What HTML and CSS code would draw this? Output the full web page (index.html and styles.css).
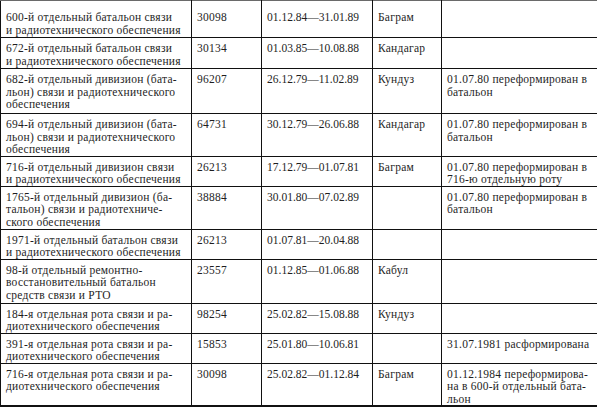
FILE: index.html
```html
<!DOCTYPE html>
<html lang="ru">
<head>
<meta charset="utf-8">
<title>Таблица</title>
<link rel="stylesheet" href="styles.css">
</head>
<body>
<table class="units">
  <colgroup>
    <col class="c-name"><col class="c-num"><col class="c-date"><col class="c-place"><col class="c-note">
  </colgroup>
  <tbody>
    <tr>
      <td><span class="ln">600-й отдельный батальон связи</span><span class="ln">и радиотехнического обеспечения</span></td>
      <td>30098</td>
      <td class="date">01.12.84—31.01.89</td>
      <td>Баграм</td>
      <td></td>
    </tr>
    <tr>
      <td><span class="ln">672-й отдельный батальон связи</span><span class="ln">и радиотехнического обеспечения</span></td>
      <td>30134</td>
      <td class="date">01.03.85—10.08.88</td>
      <td>Кандагар</td>
      <td></td>
    </tr>
    <tr>
      <td><span class="ln">682-й отдельный дивизион (бата-</span><span class="ln">льон) связи и радиотехнического</span><span class="ln">обеспечения</span></td>
      <td>96207</td>
      <td class="date">26.12.79—11.02.89</td>
      <td>Кундуз</td>
      <td><span class="ln">01.07.80 переформирован в</span><span class="ln">батальон</span></td>
    </tr>
    <tr>
      <td><span class="ln">694-й отдельный дивизион (бата-</span><span class="ln">льон) связи и радиотехнического</span><span class="ln">обеспечения</span></td>
      <td>64731</td>
      <td class="date">30.12.79—26.06.88</td>
      <td>Кандагар</td>
      <td><span class="ln">01.07.80 переформирован в</span><span class="ln">батальон</span></td>
    </tr>
    <tr>
      <td><span class="ln">716-й отдельный дивизион связи</span><span class="ln">и радиотехнического обеспечения</span></td>
      <td>26213</td>
      <td class="date">17.12.79—01.07.81</td>
      <td>Баграм</td>
      <td><span class="ln">01.07.80 переформирован в</span><span class="ln">716-ю отдельную роту</span></td>
    </tr>
    <tr>
      <td><span class="ln">1765-й отдельный дивизион (ба-</span><span class="ln">тальон) связи и радиотехниче-</span><span class="ln">ского обеспечения</span></td>
      <td>38884</td>
      <td class="date">30.01.80—07.02.89</td>
      <td></td>
      <td><span class="ln">01.07.80 переформирован в</span><span class="ln">батальон</span></td>
    </tr>
    <tr>
      <td><span class="ln">1971-й отдельный батальон связи</span><span class="ln">и радиотехнического обеспечения</span></td>
      <td>26213</td>
      <td class="date">01.07.81—20.04.88</td>
      <td></td>
      <td></td>
    </tr>
    <tr>
      <td><span class="ln">98-й отдельный ремонтно-</span><span class="ln">восстановительный батальон</span><span class="ln">средств связи и РТО</span></td>
      <td>23557</td>
      <td class="date">01.12.85—01.06.88</td>
      <td>Кабул</td>
      <td></td>
    </tr>
    <tr>
      <td><span class="ln">184-я отдельная рота связи и ра-</span><span class="ln">диотехнического обеспечения</span></td>
      <td>98254</td>
      <td class="date">25.02.82—15.08.88</td>
      <td>Кундуз</td>
      <td></td>
    </tr>
    <tr>
      <td><span class="ln">391-я отдельная рота связи и ра-</span><span class="ln">диотехнического обеспечения</span></td>
      <td>15853</td>
      <td class="date">25.01.80—10.06.81</td>
      <td></td>
      <td>31.07.1981 расформирована</td>
    </tr>
    <tr>
      <td><span class="ln">716-я отдельная рота связи и ра-</span><span class="ln">диотехнического обеспечения</span></td>
      <td>30098</td>
      <td class="date">25.02.82—01.12.84</td>
      <td>Баграм</td>
      <td><span class="ln">01.12.1984 переформирова-</span><span class="ln">на в 600-й отдельный бата-</span><span class="ln">льон</span></td>
    </tr>
  </tbody>
</table>
</body>
</html>
```

FILE: styles.css
```css
html, body {
  margin: 0;
  padding: 0;
  background: #ffffff;
}

.units {
  border-collapse: collapse;
  table-layout: fixed;
  width: 597px;
  font-family: "Liberation Serif", "Times New Roman", serif;
  font-size: 11.5px;
  line-height: 12.5px;
  letter-spacing: 0.25px;
  color: #1e1e1e;
  border-top: 1px solid #6a6a6a;
  border-left: 1px solid #111111;
  border-right: 2px solid #111111;
  border-bottom: 2px solid #111111;
}

.c-name { width: 191px; }
.c-num { width: 70px; }
.c-date { width: 111px; }
.c-place { width: 69px; }
.c-note { width: 156px; }

.units td {
  border: 1px solid #111111;
  vertical-align: top;
  padding: 4px 3px 0 5px;
  white-space: nowrap;
  overflow: hidden;
}

.units td.date {
  letter-spacing: 0;
}

.units tr:first-child td {
  border-top-color: #6a6a6a;
  padding-top: 10px;
}

/* row heights follow the printed page */
.units tr:nth-child(1) { height: 37px; }
.units tr:nth-child(2) { height: 31px; }
.units tr:nth-child(3) { height: 45px; }
.units tr:nth-child(4) { height: 42px; }
.units tr:nth-child(5) { height: 30px; }
.units tr:nth-child(6) { height: 43px; }
.units tr:nth-child(7) { height: 30px; }
.units tr:nth-child(8) { height: 44px; }
.units tr:nth-child(9) { height: 29px; }
.units tr:nth-child(10) { height: 30px; }
.units tr:nth-child(11) { height: 43px; }

.ln {
  display: block;
}
```
